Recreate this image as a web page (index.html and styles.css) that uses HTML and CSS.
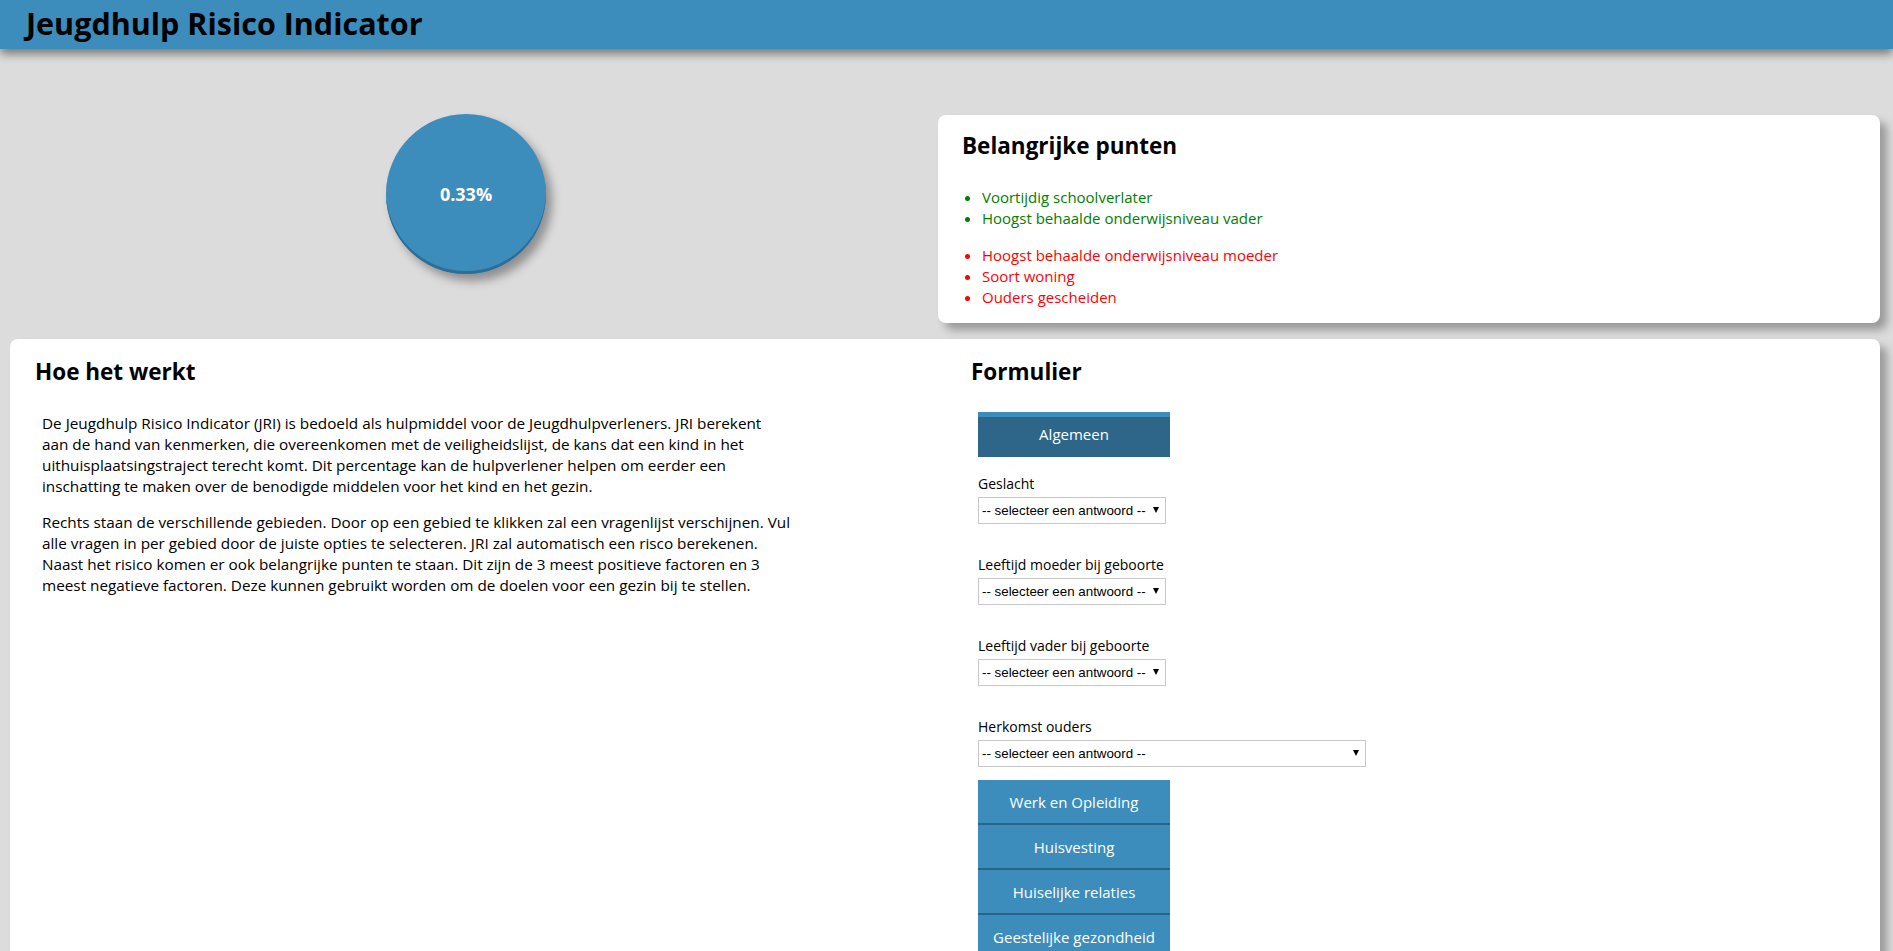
FILE: index.html
```html
<!DOCTYPE html>
<html lang="nl">
<head>
<meta charset="utf-8">
<title>Jeugdhulp Risico Indicator</title>
<link rel="stylesheet" href="styles.css">
</head>
<body>
<header class="topbar">
  <h1 class="brand">Jeugdhulp Risico Indicator</h1>
</header>

<section class="overview">
  <div class="score-col">
    <div class="score">0.33%</div>
  </div>
  <div class="card points">
    <h3 class="card-title">Belangrijke punten</h3>
    <ul class="pts pos">
      <li>Voortijdig schoolverlater</li>
      <li>Hoogst behaalde onderwijsniveau vader</li>
    </ul>
    <ul class="pts neg">
      <li>Hoogst behaalde onderwijsniveau moeder</li>
      <li>Soort woning</li>
      <li>Ouders gescheiden</li>
    </ul>
  </div>
</section>

<main class="card main">
  <section class="col info">
    <h3 class="section-title">Hoe het werkt</h3>
    <div class="text">
      <p>De Jeugdhulp Risico Indicator (JRI) is bedoeld als hulpmiddel voor de Jeugdhulpverleners. JRI berekent<br>
      aan de hand van kenmerken, die overeenkomen met de veiligheidslijst, de kans dat een kind in het<br>
      uithuisplaatsingstraject terecht komt. Dit percentage kan de hulpverlener helpen om eerder een<br>
      inschatting te maken over de benodigde middelen voor het kind en het gezin.</p>
      <p>Rechts staan de verschillende gebieden. Door op een gebied te klikken zal een vragenlijst verschijnen. Vul<br>
      alle vragen in per gebied door de juiste opties te selecteren. JRI zal automatisch een risco berekenen.<br>
      Naast het risico komen er ook belangrijke punten te staan. Dit zijn de 3 meest positieve factoren en 3<br>
      meest negatieve factoren. Deze kunnen gebruikt worden om de doelen voor een gezin bij te stellen.</p>
    </div>
  </section>

  <section class="col form">
    <h3 class="section-title">Formulier</h3>
    <div class="form-body">
      <button class="tab active" type="button">Algemeen</button>
      <div class="fields">
        <div class="field">
          <label class="lbl" for="f1">Geslacht</label>
          <span class="select"><select id="f1"><option>-- selecteer een antwoord --</option></select></span>
        </div>
        <div class="field">
          <label class="lbl" for="f2">Leeftijd moeder bij geboorte</label>
          <span class="select"><select id="f2"><option>-- selecteer een antwoord --</option></select></span>
        </div>
        <div class="field">
          <label class="lbl" for="f3">Leeftijd vader bij geboorte</label>
          <span class="select"><select id="f3"><option>-- selecteer een antwoord --</option></select></span>
        </div>
        <div class="field">
          <label class="lbl" for="f4">Herkomst ouders</label>
          <span class="select wide"><select id="f4"><option>-- selecteer een antwoord --</option></select></span>
        </div>
      </div>
      <div class="tabs">
        <button class="tab" type="button">Werk en Opleiding</button>
        <button class="tab" type="button">Huisvesting</button>
        <button class="tab" type="button">Huiselijke relaties</button>
        <button class="tab" type="button">Geestelijke gezondheid</button>
      </div>
    </div>
  </section>
</main>
</body>
</html>
```
FILE: styles.css
```css
html, body {
  margin: 0;
  padding: 0;
}

body {
  background: #dcdcdc;
  font-family: "Open Sans", "Noto Sans", sans-serif;
  color: #000;
}

.topbar {
  height: 49px;
  background: #3c8dbc;
  box-shadow: 0 5px 9px rgba(0, 0, 0, 0.45);
  position: relative;
  z-index: 2;
}

.brand {
  margin: 0;
  padding-left: 26px;
  font-size: 30.5px;
  font-weight: 700;
  line-height: 46px;
  color: #000;
}

.overview {
  display: flex;
  align-items: flex-start;
  padding: 65px 13px 0 0;
}

.score-col {
  width: 932px;
  display: flex;
  justify-content: center;
}

.score {
  width: 160px;
  height: 160px;
  border-radius: 50%;
  background: #3c8dbc;
  box-shadow: inset 0 -3px 0 #2e6d96, 6px 7px 10px rgba(0, 0, 0, 0.35);
  color: #fff;
  font-weight: 700;
  font-size: 18px;
  display: flex;
  align-items: center;
  justify-content: center;
}

.card {
  background: #fff;
  border-radius: 8px;
  box-shadow: 7px 7px 8px rgba(0, 0, 0, 0.3);
}

.points {
  flex: 1;
  margin: 1px 0 0 6px;
  padding: 18px 24px 15px;
}

.card-title,
.section-title {
  margin: 0;
  font-size: 22.5px;
  font-weight: 700;
  line-height: 26px;
}

.card-title {
  margin-bottom: 28px;
}

.pts {
  margin: 0;
  padding-left: 20px;
  font-size: 15px;
  line-height: 21px;
}

.pos {
  color: #008000;
}

.neg {
  color: #ff0000;
  margin-top: 16px;
}

.main {
  display: grid;
  grid-template-columns: 1fr 1fr;
  margin: 16px 13px 0 10px;
  padding: 20px 0 40px;
}

.col {
  padding-left: 25px;
}

.form {
  padding-left: 26px;
}

.section-title {
  margin-bottom: 28px;
}

.text {
  padding-left: 7px;
  max-width: 820px;
}

.text p {
  margin: 0 0 15px;
  font-size: 15.3px;
  line-height: 21px;
  white-space: nowrap;
}

.form-body {
  padding-left: 7px;
}

.tab {
  display: block;
  width: 192px;
  margin: 0;
  border: 0;
  border-bottom: 2px solid #2a6385;
  background: #3c8dbc;
  color: #fff;
  font-family: inherit;
  font-size: 15px;
  line-height: 21px;
  padding: 12px 0 10px;
  text-align: center;
}

.tab.active {
  margin-top: -1px;
  background: #2d6689;
  box-shadow: inset 0 5px 0 #3c8dbc;
  border-bottom-color: #2d6689;
}

.fields {
  padding-top: 16px;
  display: flex;
  flex-direction: column;
  gap: 30px;
}

.lbl {
  display: block;
  font-size: 14px;
  line-height: 21px;
  margin-bottom: 3px;
}

.select {
  display: inline-block;
  position: relative;
  vertical-align: top;
}

.select select {
  -webkit-appearance: none;
  appearance: none;
  display: block;
  width: 188px;
  height: 27px;
  margin: 0;
  border: 1px solid #c8c8c8;
  border-radius: 0;
  background: #fff;
  color: #000;
  font-family: "Liberation Sans", Arial, sans-serif;
  font-size: 13.333px;
  padding: 0 18px 0 3px;
}

.select.wide select {
  width: 388px;
}

.select::after {
  content: "";
  position: absolute;
  right: 7px;
  top: 10px;
  border-left: 3px solid transparent;
  border-right: 3px solid transparent;
  border-top: 6px solid #000;
  pointer-events: none;
}

.tabs {
  margin-top: 13px;
}
```
